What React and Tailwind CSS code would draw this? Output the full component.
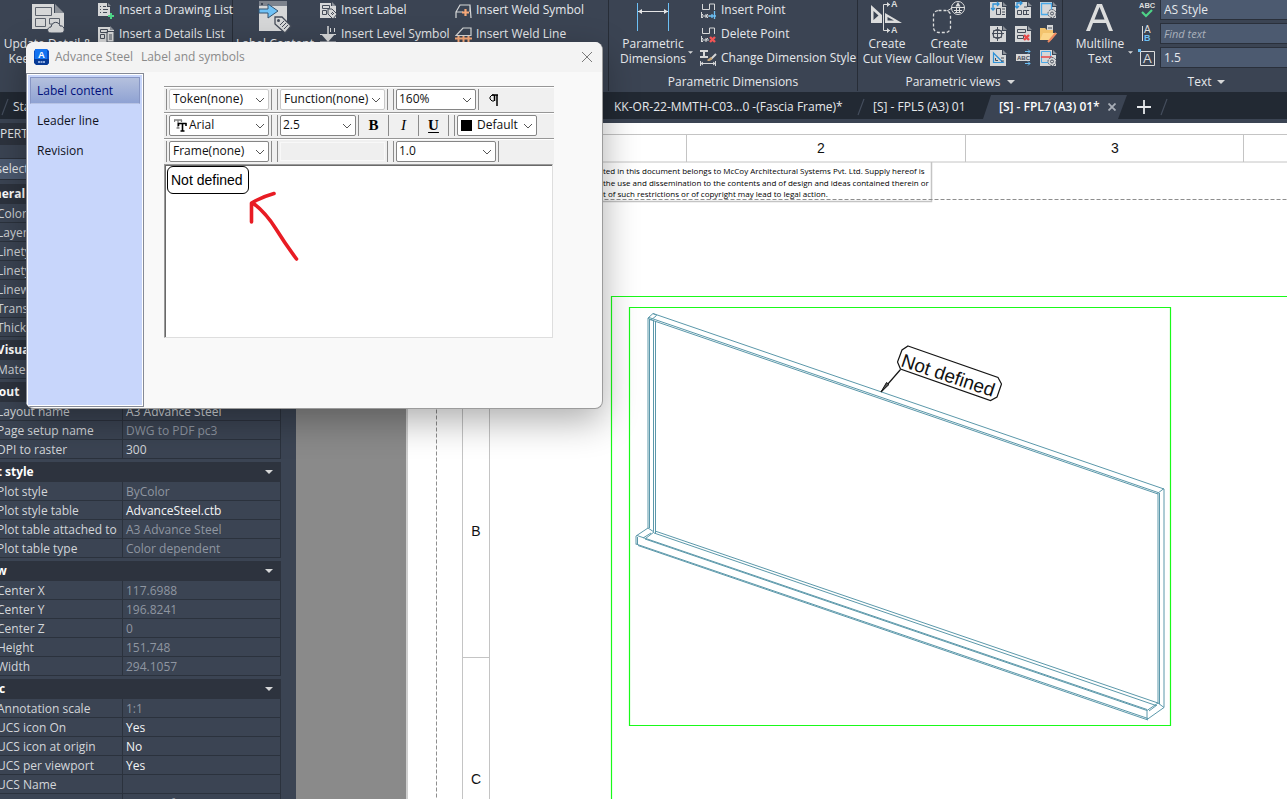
import React from "react";

const ribbonText = "font-['Open_Sans','Noto_Sans',sans-serif] text-[12px] text-[#e6e8eb]";

function Icon({ children, className = "h-[18px] w-[18px]", box = "0 0 18 18" }) {
  return (
    <svg viewBox={box} className={`shrink-0 ${className}`} fill="none" aria-hidden="true">
      {children}
    </svg>
  );
}

/* ---------- ribbon icons ---------- */

function SheetBase({ children }) {
  return (
    <Icon>
      <path d="M0 1H12V6H16V17H0Z" fill="#d6d7d8" />
      <path d="M13 1L17 5H13Z" fill="#8b9098" />
      {children}
    </Icon>
  );
}

const icons = {
  drawingList: (
    <Icon>
      <path d="M0 2H9V6H12V15H0Z" fill="#d6d7d8" />
      <path d="M10 2L13 5H10Z" fill="#8b9098" />
      <path d="M2 5.500H3M5 5.500H8M2 8.500H3M5 8.500H10M2 11.500H3M5 11.500H9" stroke="#454c59" />
      <path d="M13 12V18M10 15H16" stroke="#4ed387" strokeWidth="2" />
    </Icon>
  ),
  detailsList: (
    <Icon>
      <path d="M0 2H12V5H16V17H0Z" fill="#d6d7d8" />
      <path d="M12 1L16 5H12Z" fill="#8b9098" />
      <path d="M2.500 4.500H9.500V7.500H2.500ZM2.500 9.500H6.500V13.500H2.500ZM9 6.500H16V17H9Z" stroke="#454c59" fill="#d6d7d8" />
      <path d="M11 10H14M11 12H14M11 14H14" stroke="#454c59" />
    </Icon>
  ),
  insertLabel: (
    <Icon>
      <path d="M0 2H11V5H16V17H0Z" fill="#d6d7d8" />
      <path d="M12 1L16 5H12Z" fill="#8b9098" />
      <path d="M2.500 4.500H9.500V7.500H2.500ZM2.500 9.500H6.500V13.500H2.500Z" stroke="#454c59" />
      <path d="M8 8H12L17 13L13 18L8 13Z" fill="#d6d7d8" stroke="#454c59" />
      <path d="M11 12L13 14M12 11L14 13" stroke="#454c59" />
    </Icon>
  ),
  levelSymbol: (
    <Icon>
      <path d="M0 9.500H16M8 1V10M10.500 3V7M14.500 3V7" stroke="#d6d7d8" />
      <path d="M1 9H15L8 17Z" fill="#d6d7d8" />
      <path d="M8 1V12M0 17H16" stroke="#d6d7d8" />
    </Icon>
  ),
  weldSymbol: (
    <Icon>
      <path d="M1 17V11H8M1 11L5 4H15V11M15 4L16 17" stroke="#d6d7d8" strokeWidth="1.200" />
      <path d="M10.500 8V15M7 11.500H14" stroke="#f7a878" strokeWidth="2.200" />
    </Icon>
  ),
  weldLine: (
    <Icon>
      <path d="M1 10.500H16V3H8L2 9.500Z" stroke="#d6d7d8" strokeWidth="1.200" />
      <path d="M0 13.500H17M3.500 11V17M8.500 11V17M13.500 11V17" stroke="#f7a878" strokeWidth="2" />
    </Icon>
  ),
  insertPoint: (
    <Icon>
      <path d="M2.500 3V8.500H9.500V3H14.500V9" stroke="#d6d7d8" />
      <path d="M1.500 11V17M1 15H10M3 13L1 15L3 17M6 13V17M8 13L6 15L8 17" stroke="#d6d7d8" />
      <path d="M14.500 10V18M9 15H16M12 13V17" stroke="#6cc0f5" strokeWidth="1.300" />
    </Icon>
  ),
  deletePoint: (
    <Icon>
      <path d="M2.500 3V8.500H9.500V3H14.500V9" stroke="#d6d7d8" />
      <path d="M1.500 11V17M1 15H9M3 13L1 15L3 17M6 13V17M8 13L6 15" stroke="#d6d7d8" />
      <path d="M10 12L15 17M15 12L10 17" stroke="#f25555" strokeWidth="2.400" />
    </Icon>
  ),
  dimensionStyle: (
    <Icon>
      <path d="M0 2H8M4 2V8M0 8H8" stroke="#d6d7d8" strokeWidth="2" />
      <path d="M16 5L11 10" stroke="#d6d7d8" strokeWidth="2" />
      <path d="M11 8L7 11L8 12C11 12 13 10 12 9Z" fill="#c9a878" />
      <path d="M0.500 12V17M15.500 12V17M1 14.500H15M3 13L1 14.500L3 16M13 13L15 14.500L13 16" stroke="#d6d7d8" />
    </Icon>
  ),
};

const gridIcons = [
  <SheetBase key="a"><path d="M3 9V3H9M7 1L9 3L7 5M1 7L3 9L5 7" stroke="#2f93d8" strokeWidth="1.300" /><path d="M6.500 7.500H10.500V13.500H6.500ZM12 8H15M12 11H15M12 13.500H15" stroke="#454c59" /></SheetBase>,
  <SheetBase key="b"><path d="M2 6V2H7M5 0L7 2L5 4M0 5L2 7L4 5" stroke="#2f93d8" strokeWidth="1.300" /><path d="M9 6H12M2.500 9.500H6.500V13.500H2.500ZM8 9.500H14M8 13.500H14M8.500 9V14M11.500 9V14" stroke="#454c59" /></SheetBase>,
  <SheetBase key="c"><path d="M1.500 2.500H11.500V13.500H1.500Z" stroke="#4aa9e8" strokeWidth="1.300" /><circle cx="12" cy="12.500" r="4" fill="#d6d7d8" stroke="#4d5461" strokeDasharray="2 1" /><circle cx="12" cy="12.500" r="1.500" stroke="#4d5461" /></SheetBase>,
  <SheetBase key="d"><path d="M7.500 2V16M2 8.500H14M3.500 5.500H11.500V12.500H3.500Z" stroke="#454c59" /><circle cx="7.500" cy="9" r="4.500" stroke="#454c59" /></SheetBase>,
  <SheetBase key="e"><path d="M2.500 4.500H10.500V7.500H2.500ZM2.500 10.500H8.500V13.500H2.500Z" stroke="#454c59" /><path d="M9 10L14 15M14 10L9 15" stroke="#e84848" strokeWidth="2.400" /></SheetBase>,
  <Icon key="f"><path d="M7 0H13V6H7Z" fill="#d6d7d8" /><path d="M8 3H12" stroke="#454c59" /><path d="M0 3H5L7 5H13V9L9 15H0Z" fill="#f3c36d" /><path d="M3 8H17L11 15H0Z" fill="#fbd58a" /><path d="M16 8L10 15L8 17" stroke="#ef8a62" strokeWidth="2" /></Icon>,
  <SheetBase key="g"><path d="M3.500 4V13.500H13Z" stroke="#2f93d8" strokeWidth="1.200" /><path d="M5.500 9V11.500H8M11 9H14M11 12H14" stroke="#454c59" /></SheetBase>,
  <Icon key="h"><path d="M1 5H15V12H1Z" fill="#d6d7d8" /><text x="2" y="11" fontSize="6" fontWeight="700" fill="#454c59" fontFamily="Liberation Sans, sans-serif">ABC</text><path d="M10 2.500H15M13 0.500L15 2.500L13 4.500M10 14.500H15M13 12.500L15 14.500L13 16.500" stroke="#6cc0f5" /></Icon>,
  <SheetBase key="i"><path d="M1.500 2.500H10.500V13.500H1.500Z" stroke="#4aa9e8" /><path d="M1 8H12" stroke="#e84848" strokeWidth="1.500" /><circle cx="12" cy="12.500" r="4" fill="#d6d7d8" stroke="#4d5461" strokeDasharray="2 1" /><circle cx="12" cy="12.500" r="1.500" stroke="#4d5461" /></SheetBase>,
];

const bigIcon = "h-9 w-9";

const bigIcons = {
  update: (
    <Icon className={bigIcon} box="0 0 36 36">
      <path d="M2 4H24V13H34V29H2Z" fill="#d6d7d8" />
      <path d="M25 4L34 13H25Z" fill="#8b9098" />
      <path d="M5.500 7.500H21.500V15.500H5.500ZM5.500 18.500H15.500V26.500H5.500ZM19.500 18.500H29.500V24H19.500Z" stroke="#5c626d" />
      <path d="M21 33C16 33 17 27 21 27C22 21 29 21 30 26C35 25 36 33 31 33Z" fill="#d6d7d8" stroke="#3d4554" />
    </Icon>
  ),
  label: (
    <Icon className={bigIcon} box="0 0 36 36">
      <path d="M2 1H30V31H2Z" fill="#d6d7d8" />
      <path d="M2 1H30V6H2Z" fill="#7d838d" />
      <path d="M4 4H6" stroke="#3d4554" strokeWidth="2" />
      <path d="M2 9H11V4L21 11L11 18V13H2Z" fill="#70c1f5" stroke="#35536e" />
      <path d="M18 17H25L34 26L28 33L18 24Z" fill="#d6d7d8" stroke="#454c59" strokeWidth="1.300" />
      <circle cx="21.500" cy="20.500" r="1.500" fill="#454c59" />
      <path d="M23 25L27 21M25 27L29 23M27 29L31 25" stroke="#454c59" />
    </Icon>
  ),
  dimensions: (
    <Icon className={bigIcon} box="0 0 36 36">
      <path d="M2.500 3V31M33.500 3V31" stroke="#6cc0f5" />
      <path d="M3 11.500H33" stroke="#e4e5e6" />
      <path d="M3 11.500L7 9V14ZM33 11.500L29 9V14Z" fill="#e4e5e6" />
    </Icon>
  ),
  cut: (
    <Icon className={bigIcon} box="0 0 36 36">
      <path d="M2 5V23H13V15ZM4.500 11L9.500 15.500L4.500 20Z" fill="#dcdddd" fillRule="evenodd" />
      <path d="M14.500 4.500V30.500H21M14.500 4.500H21" stroke="#dcdddd" />
      <path d="M16 13L33 23H16ZM18.500 17V20.500H25Z" fill="#dcdddd" fillRule="evenodd" />
      <path d="M18 2L21 4.500L18 7ZM18 28L21 30.500L18 33Z" fill="#dcdddd" />
      <text x="22" y="7" fontSize="9" fontWeight="700" fill="#dcdddd" fontFamily="Liberation Sans, sans-serif">A</text>
      <text x="22" y="33" fontSize="9" fontWeight="700" fill="#dcdddd" fontFamily="Liberation Sans, sans-serif">A</text>
    </Icon>
  ),
  callout: (
    <Icon className={bigIcon} box="0 0 36 36">
      <rect x="2.500" y="10.500" width="17" height="22" rx="5" stroke="#dcdddd" strokeDasharray="3 2" strokeWidth="1.300" />
      <path d="M16 11L21 8" stroke="#dcdddd" />
      <circle cx="27" cy="8" r="6.500" stroke="#dcdddd" />
      <path d="M20.500 7.500H34M23 10.500H31M24 12.500H30M25.500 8V13M28.500 8V13" stroke="#dcdddd" />
      <path d="M24.500 6.500L27 2L29.500 6.500Z" fill="#dcdddd" />
    </Icon>
  ),
  multiline: (
    <Icon className={bigIcon} box="0 0 36 36">
      <path d="M4 31L15 4H20L31 31H27L24 23H11L8 31ZM12.500 19.500H22.500L17.500 7Z" fill="#dcdddd" fillRule="evenodd" />
    </Icon>
  ),
};

function DownMark({ className = "h-1 w-2" }) {
  return (
    <svg viewBox="0 0 8 4" className={`shrink-0 ${className}`} aria-hidden="true">
      <path d="M0 0H8L4 4Z" fill="#d6d7d8" />
    </svg>
  );
}

function BigButton({ icon, lines, width, menu }) {
  return (
    <button type="button" className={`relative flex shrink-0 flex-col items-center ${width}`}>
      {icon}
      {lines.map((l) => (
        <span key={l} className="whitespace-nowrap leading-[15px]">{l}</span>
      ))}
      {menu && <DownMark className="absolute right-1 top-[51px] h-[3px] w-[5px]" />}
    </button>
  );
}

function SmallList({ items, width = "" }) {
  return (
    <div className={`-mt-0.5 flex shrink-0 flex-col ${width}`}>
      {items.map(([icon, label]) => (
        <button key={label} type="button" className="flex h-6 items-center gap-[3px] whitespace-nowrap text-left">
          {icons[icon]}
          <span>{label}</span>
        </button>
      ))}
    </div>
  );
}

function Panel({ title, menu, width, children }) {
  return (
    <section className={`flex h-[91px] shrink-0 flex-col border-r border-[#272d37] ${width}`}>
      <div className="flex h-[72px]">{children}</div>
      <div className="flex flex-1 items-center justify-center gap-1.5">
        <span>{title}</span>
        {menu && <DownMark />}
      </div>
    </section>
  );
}

function Ribbon() {
  const field = "h-[21px] w-full border border-[#2a303b] bg-[#4c5a70] pl-[3px] text-[#e6e8eb] outline-none";
  return (
    <header className={`flex h-[92px] shrink-0 overflow-hidden bg-[#3b4453] ${ribbonText}`}>
      <Panel width="w-[233px]">
        <BigButton width="w-24" icon={bigIcons.update} lines={["Update Detail &", "Keep Changes"]} />
        <div className="w-0.5 shrink-0" />
        <SmallList items={[["drawingList", "Insert a Drawing List"], ["detailsList", "Insert a Details List"]]} />
      </Panel>
      <Panel width="w-[376px]">
        <BigButton width="w-[84px]" icon={bigIcons.label} lines={["Label Content"]} />
        <div className="w-[3px] shrink-0" />
        <SmallList width="w-[135px]" items={[["insertLabel", "Insert Label"], ["levelSymbol", "Insert Level Symbol"]]} />
        <SmallList items={[["weldSymbol", "Insert Weld Symbol"], ["weldLine", "Insert Weld Line"]]} />
      </Panel>
      <Panel width="w-[249px]" title="Parametric Dimensions">
        <BigButton width="w-[88px]" icon={bigIcons.dimensions} lines={["Parametric", "Dimensions"]} menu />
        <div className="w-[3px] shrink-0" />
        <SmallList
          items={[["insertPoint", "Insert Point"], ["deletePoint", "Delete Point"], ["dimensionStyle", "Change Dimension Style"]]}
        />
      </Panel>
      <Panel width="w-[205px]" title="Parametric views" menu>
        <BigButton width="w-[58px]" icon={bigIcons.cut} lines={["Create", "Cut View"]} />
        <BigButton width="w-[66px]" icon={bigIcons.callout} lines={["Create", "Callout View"]} />
        <div className="ml-2 mt-px grid h-[66px] grid-cols-3 gap-x-[7px] gap-y-1.5">
          {gridIcons.map((g, i) => (
            <button key={i} type="button" aria-label={`Parametric view tool ${i + 1}`} className="h-[18px] w-[18px]">
              {g}
            </button>
          ))}
        </div>
      </Panel>
      <Panel width="w-[288px]" title="Text" menu>
        <BigButton width="w-[74px]" icon={bigIcons.multiline} lines={["Multiline", "Text"]} menu />
        <div className="flex w-[23px] shrink-0 flex-col items-center gap-1.5 pr-1">
          <Icon className="h-[18px] w-[18px]">
            <text x="1" y="8" fontSize="7.500" fontWeight="700" fill="#dcdddd" fontFamily="Liberation Sans, sans-serif">ABC</text>
            <path d="M4 12L8 16L14 10" stroke="#4ed387" strokeWidth="2.200" />
          </Icon>
          <Icon className="h-[18px] w-[18px]">
            <path d="M4.500 2V17" stroke="#dcdddd" />
            <text x="6" y="9" fontSize="10" fill="#dcdddd" fontFamily="Liberation Sans, sans-serif">A</text>
            <text x="6" y="17" fontSize="9" fontWeight="700" fill="#6cc0f5" fontFamily="Liberation Sans, sans-serif">B</text>
          </Icon>
          <Icon className="h-[18px] w-[18px]">
            <path d="M2.500 3.500H16.500V17.500H2.500Z" stroke="#dcdddd" />
            <path d="M0 1H3V4H0Z" fill="#6cc0f5" />
            <text x="5" y="15" fontSize="13" fill="#dcdddd" fontFamily="Liberation Sans, sans-serif">A</text>
          </Icon>
        </div>
        <div className="-mt-px flex flex-1 flex-col gap-[3px]">
          <input aria-label="Text style" defaultValue="AS Style" className={`${field} text-[12px]`} />
          <input aria-label="Find text" placeholder="Find text" className={`${field} text-[11px] italic placeholder:text-[#a9b0bb]`} />
          <input aria-label="Text height" defaultValue="1.5" className={`${field} text-[12px]`} />
        </div>
      </Panel>
    </header>
  );
}

/* ---------- drawing tabs ---------- */

function Slash() {
  return (
    <svg viewBox="0 0 8 18" className="h-[18px] w-2 shrink-0" aria-hidden="true">
      <path d="M1 17L7 1" stroke="#454e5d" strokeWidth="1.200" />
    </svg>
  );
}

function FileTabs() {
  return (
    <nav className={`flex h-[27px] shrink-0 items-center whitespace-nowrap bg-[#222933] pt-0.5 ${ribbonText}`}>
      <div className="flex w-[614px] shrink-0 items-center gap-1 pl-px">
        <Slash />
        <button type="button">Start</button>
      </div>
      <button type="button" className="w-[243px] shrink-0 text-left">KK-OR-22-MMTH-C03...0 -(Fascia Frame)*</button>
      <Slash />
      <button type="button" className="ml-2 w-[110px] shrink-0 text-left">[S] - FPL5 (A3) 01</button>
      <div className="mt-px flex h-6 w-[144px] shrink-0 items-center justify-between bg-[#3b4453] pl-4 pr-[11px] [clip-path:polygon(8px_0,100%_0,calc(100%-9px)_100%,0_100%)]">
        <button type="button" className="font-semibold text-white">[S] - FPL7 (A3) 01*</button>
        <button type="button" aria-label="Close tab">
          <svg viewBox="0 0 8 8" className="h-2 w-2" aria-hidden="true">
            <path d="M0.500 0.500L7.500 7.500M7.500 0.500L0.500 7.500" stroke="#a9afb8" strokeWidth="1.800" />
          </svg>
        </button>
      </div>
      <button type="button" aria-label="New tab" className="ml-2.5 shrink-0">
        <svg viewBox="0 0 14 14" className="h-3.5 w-3.5" aria-hidden="true">
          <path d="M7 0V14M0 7H14" stroke="#e6e8eb" strokeWidth="1.800" />
        </svg>
      </button>
      <div className="w-[9px] shrink-0" />
      <Slash />
    </nav>
  );
}

/* ---------- properties palette ---------- */

const sections = [
  ["General", [["Color", ""], ["Layer", ""], ["Linetype", ""], ["Linetype scale", ""], ["Lineweight", ""], ["Transparency", ""], ["Thickness", ""]]],
  ["3D Visualization", [["Material", ""]]],
  ["Layout", [["Layout name", "A3 Advance Steel", "mid"], ["Page setup name", "DWG to PDF pc3"], ["DPI to raster", "300", "mid"]]],
  ["Plot style", [["Plot style", "ByColor"], ["Plot style table", "AdvanceSteel.ctb", "on"], ["Plot table attached to", "A3 Advance Steel"], ["Plot table type", "Color dependent"]]],
  ["View", [["Center X", "117.6988"], ["Center Y", "196.8241"], ["Center Z", "0"], ["Height", "151.748"], ["Width", "294.1057"]]],
  ["Misc", [["Annotation scale", "1:1"], ["UCS icon On", "Yes", "on"], ["UCS icon at origin", "No", "on"], ["UCS per viewport", "Yes", "on"], ["UCS Name", ""], ["", "2D Wireframe"]]],
];

function valueColor(kind) {
  if (kind === "on") return "text-[#f3f4f6]";
  if (kind === "mid") return "text-[#d3d6da]";
  return "text-[#8f96a1]";
}

function Properties() {
  return (
    <aside className={`-ml-6 w-80 shrink-0 overflow-hidden bg-[#3b4453] pr-[15px] ${ribbonText}`}>
      <h2 className="h-[22px] bg-[#2d333e] leading-[21px]">PROPERTIES</h2>
      <div className="h-[13px]" />
      <select aria-label="Selection" className="mb-1 block h-[22px] w-full appearance-none border border-[#2a303b] bg-[#4c5a70] text-[12px] text-[#e6e8eb]">
        <option>No selection</option>
      </select>
      {sections.map(([title, rows]) => (
        <section key={title} className="mb-[3px]">
          <button type="button" className="flex h-5 w-full items-center justify-between bg-[#2d333e] pl-0.5 pr-2 text-left font-bold text-white">
            {title}
            <DownMark />
          </button>
          <table className="w-full table-fixed border-separate border-spacing-0">
            <tbody>
              {rows.map(([k, v, kind]) => (
                <tr key={k}>
                  <th scope="row" className="h-[19px] w-[147px] whitespace-nowrap border-b border-r border-[#2b323d] p-0 pl-[21px] pt-px text-left font-normal leading-[17px] text-[#d3d6da]">{k}</th>
                  <td className={`h-[19px] border-b border-r border-[#2b323d] p-0 pl-[3px] pt-px leading-[17px] ${valueColor(kind)}`}>{v}</td>
                </tr>
              ))}
            </tbody>
          </table>
        </section>
      ))}
    </aside>
  );
}

/* ---------- drawing sheet ---------- */

function Drawing() {
  return (
    <div className="min-w-0 flex-1 overflow-hidden bg-[#8a8a8a] pl-[110px]">
      <svg className="block h-full w-full border-l-2 border-[#cfcfcf] bg-white" role="img" aria-label="Sheet FPL7">
        <g transform="translate(-408 -123)">
          <g stroke="#c4c4c4" fill="none">
            <path d="M408 134.500H2600M462 162H2600M686.500 134V162M965.500 134V162M1243.500 134V162" />
            <path d="M462.500 162V1600M489.500 162V1600M462 657.500H489" />
            <path d="M500 201.500H931.500V162" strokeWidth="1.500" />
            <path d="M436.500 199.500V1600M436.500 199.500H2600" stroke="#8e8e8e" strokeDasharray="4 2" />
          </g>
          <g fontFamily="Liberation Sans, Arial, sans-serif" fontSize="14" fill="#111" textAnchor="middle">
            <text x="821" y="153">2</text>
            <text x="1115" y="153">3</text>
            <text x="476" y="536">B</text>
            <text x="476" y="784">C</text>
          </g>
          <g fontFamily="Open Sans, Noto Sans, sans-serif" fontSize="8" fill="#000">
            <text x="603" y="174">ted in this document belongs to McCoy Architectural Systems Pvt. Ltd. Supply hereof is</text>
            <text x="603" y="186">the use and dissemination to the contents and of design and ideas contained therein or</text>
            <text x="603" y="197">t of such restrictions or of copyright may lead to legal action.</text>
          </g>
          <g stroke="#19fa19" fill="none" strokeWidth="1.200">
            <path d="M611.500 1600V296.500H2600" />
            <path d="M629.500 307.500H1170.500V725.500H629.500Z" />
          </g>
          <g stroke="#5b98aa" fill="none">
            <path d="M653 313.500L1164 489M649 317.500L1158 492.500M650 319.500L1158 494" />
            <path d="M648 318L653 313.500L657 315.500M648 318L651 320L656 316M1158 493L1164 488.500" />
            <path d="M648 318V528M649.500 319V528M653.500 320V531M655.500 321V533" />
            <path d="M1158 492.500V703M1159.500 493V704M1164 489V707.500" />
            <path d="M655 531L1158 703M654 533L1156 705.500" />
            <path d="M637 535.500L1147 709.500M645 539L1147 710.500" />
            <path d="M636 544L1148 718.500M638 545.500L1148 720" />
            <path d="M648 528L636 536V544.500M637.500 537V545M648 528L654 532L645.500 538.500M651 533L643 538" />
            <path d="M1158 703L1147 710.500V719.500L1164 707.500L1158 703M1157 705L1149 711" />
          </g>
          <g stroke="#151515" fill="none" strokeWidth="1.200">
            <path d="M908 346L998 377.500L1001.500 384L997 397L990.500 400.500L900.500 369L897.500 362L902 350Z" />
            <path d="M900.500 369.500L881 392" />
            <path d="M881 392L886.500 382.500L889 384.500Z" fill="#555" strokeWidth="1" />
          </g>
          <text transform="translate(900 366) rotate(18.500)" fontFamily="Liberation Sans, Arial, sans-serif" fontSize="19" fill="#111">
            Not defined
          </text>
        </g>
      </svg>
    </div>
  );
}

/* ---------- dialog ---------- */

function Combo({ label, value, width, icon, faint, tall }) {
  return (
    <div className={`relative h-[21px] shrink-0 ${width}`}>
      <select
        aria-label={label}
        className={`h-full w-full appearance-none rounded-[2px] border bg-white text-[12px] leading-[17px] text-[#111] ${
          faint ? "border-[#c9c9c9]" : "border-[#858585]"
        } ${icon ? "pl-[19px]" : tall ? "pl-[2px]" : "pl-[3px]"} pb-0.5`}
      >
        <option>{value}</option>
      </select>
      {icon}
      <svg viewBox="0 0 10 6" className="pointer-events-none absolute right-1 top-2 h-1.5 w-2.5" aria-hidden="true">
        <path d="M1 1L5 5L9 1" fill="none" stroke="#555" />
      </svg>
    </div>
  );
}

function Sep() {
  return <div className="h-[21px] w-px shrink-0 bg-[#8b8b8b]" />;
}

function Group({ children }) {
  return (
    <div className="flex items-center gap-0.5">
      <Sep />
      {children}
      <Sep />
    </div>
  );
}

function ToolRow({ children }) {
  return (
    <div className="flex h-[26px] items-center border-t border-[#979797] bg-[#f0f0f0] pl-0.5 shadow-[inset_0_1px_0_#fff]">
      {children}
    </div>
  );
}

function FormatButton({ label, children }) {
  return (
    <>
      <button type="button" aria-label={label} className="flex h-[21px] w-[29px] items-center justify-center font-['Liberation_Serif',serif] text-[15px] leading-none text-black">
        {children}
      </button>
      <Sep />
    </>
  );
}

const twoT = (
  <svg viewBox="0 0 13 13" className="pointer-events-none absolute left-[5px] top-1 h-[13px] w-[13px]" aria-hidden="true">
    <path d="M0 1H8M0.500 1V3M7.500 1V3M4 1V9M2.500 9H5.500" stroke="#808080" strokeWidth="1.300" fill="none" />
    <path d="M4 4.500H12.500M4.500 4V7M12 4V7M8.500 4V12M6.500 12H10.500" stroke="#000" strokeWidth="1.600" fill="none" />
  </svg>
);

const swatch = <span className="pointer-events-none absolute left-1 top-[5px] h-[11px] w-[11px] bg-black" />;

function Dialog() {
  const tabs = ["Label content", "Leader line", "Revision"];
  return (
    <div
      role="dialog"
      aria-label="Advance Steel Label and symbols"
      className="absolute left-[26px] top-[42px] flex h-[367px] w-[577px] flex-col overflow-hidden rounded-lg border-b border-r border-[#9c9c9c] bg-[#f9f9f9] font-['Open_Sans','Noto_Sans',sans-serif] text-[12px] shadow-[0_12px_36px_rgba(0,0,0,0.32)]"
    >
      <div className="flex h-[30px] shrink-0 items-center bg-[#f3f3f3] pl-2 pr-2.5 text-[#8a8a8a]">
        <svg viewBox="0 0 15 16" className="h-4 w-[15px]" aria-hidden="true">
          <path d="M2 0H13L15 2V14L13 16H3L0 13V2Z" fill="#0a4ec2" />
          <path d="M1 0H13V10H1Z" fill="#1473f0" />
          <text x="7.500" y="9" fontSize="9.500" fontWeight="700" fill="#fff" textAnchor="middle" fontFamily="Liberation Sans, sans-serif">A</text>
          <path d="M0 10H15V14L13 16H2L0 14Z" fill="#073a96" />
          <path d="M4 13H11" stroke="#b8cdf3" strokeWidth="1.500" strokeDasharray="2 0.500" />
        </svg>
        <span className="ml-1.5">Advance Steel</span>
        <span className="ml-2 flex-1">Label and symbols</span>
        <button type="button" aria-label="Close">
          <svg viewBox="0 0 10 10" className="h-2.5 w-2.5" aria-hidden="true">
            <path d="M0 0L10 10M10 0L0 10" stroke="#7a7a7a" />
          </svg>
        </button>
      </div>
      <div className="flex min-h-0 flex-1">
        <nav className="mb-px mt-px flex w-[118px] shrink-0 flex-col gap-[3px] border border-[#858a96] bg-[#c8d6fb] p-[3px] shadow-[inset_0_0_0_1px_#fff]">
          {tabs.map((t, i) => (
            <button
              key={t}
              type="button"
              className={
                i === 0
                  ? "h-[27px] border border-[#8796c4] border-b-[#b7c3e4] bg-linear-to-b from-[#b4c0dd] to-[#8fa2d3] pl-1.5 text-left text-[#00107a]"
                  : "h-[27px] pl-[7px] text-left text-[#10131c]"
              }
            >
              {t}
            </button>
          ))}
        </nav>
        <div className="ml-5 mt-3.5 w-[390px]">
          <ToolRow>
            <Group><Combo label="Token" value="Token(none)" width="w-[100px]" faint /></Group>
            <div className="w-[5px]" />
            <Group><Combo label="Function" value="Function(none)" width="w-[105px]" faint /></Group>
            <div className="w-[5px]" />
            <Group><Combo label="Zoom" value="160%" width="w-20" tall /></Group>
            <button type="button" aria-label="Paragraph marks" className="ml-2.5">
              <svg viewBox="0 0 9 12" className="h-3 w-[9px]" aria-hidden="true">
                <path d="M3 1H9M5.500 1V7M8 1V12" stroke="#000" strokeWidth="1.500" fill="none" />
                <path d="M5 1H3L1 3V5L3 7H5" stroke="#000" fill="none" />
              </svg>
            </button>
          </ToolRow>
          <ToolRow>
            <Group><Combo label="Font" value="Arial" width="w-[100px]" icon={twoT} /></Group>
            <div className="w-[5px]" />
            <Group><Combo label="Text size" value="2.5" width="w-[76px]" tall /></Group>
            <FormatButton label="Bold"><b>B</b></FormatButton>
            <FormatButton label="Italic"><i>I</i></FormatButton>
            <FormatButton label="Underline"><b className="underline underline-offset-2">U</b></FormatButton>
            <div className="w-[5px]" />
            <div className="flex items-center gap-0.5">
              <Sep />
              <Combo label="Color" value="Default" width="w-20" icon={swatch} />
            </div>
          </ToolRow>
          <ToolRow>
            <Group><Combo label="Frame" value="Frame(none)" width="w-[100px]" /></Group>
            <div className="w-[5px]" />
            <Group><div className="h-[19px] w-[105px] border border-[#f8f8f8] bg-[#efefef]" /></Group>
            <div className="w-[5px]" />
            <Group><Combo label="Line spacing" value="1.0" width="w-[100px]" tall /></Group>
          </ToolRow>
          <div className="relative h-[174px] w-[389px] border border-[#9a9a9a] border-b-[#dedede] border-r-[#dedede] bg-white shadow-[inset_1px_1px_0_#696969]">
            <input
              aria-label="Label text"
              defaultValue="Not defined"
              className="ml-0.5 mt-px block h-7 w-[82px] rounded-md border border-black bg-white pl-[3px] font-['Liberation_Sans',Arial,sans-serif] text-[14px] text-black outline-none"
            />
            <svg className="pointer-events-none absolute left-[83px] top-[23px] h-[76px] w-[54px]" viewBox="248 188 54 76" aria-hidden="true">
              <path d="M251.500 222V203L256 200.500Q265 196 274 193.500M253 203Q266 213 276 229T296.500 259" fill="none" stroke="#e81c24" strokeWidth="3.600" strokeLinecap="round" strokeLinejoin="round" />
            </svg>
          </div>
        </div>
      </div>
    </div>
  );
}

export default function App() {
  return (
    <div className="relative flex h-screen flex-col overflow-hidden bg-[#3b4453]">
      <Ribbon />
      <FileTabs />
      <main className="mt-1 flex min-h-0 flex-1">
        <Properties />
        <Drawing />
      </main>
      <Dialog />
    </div>
  );
}
